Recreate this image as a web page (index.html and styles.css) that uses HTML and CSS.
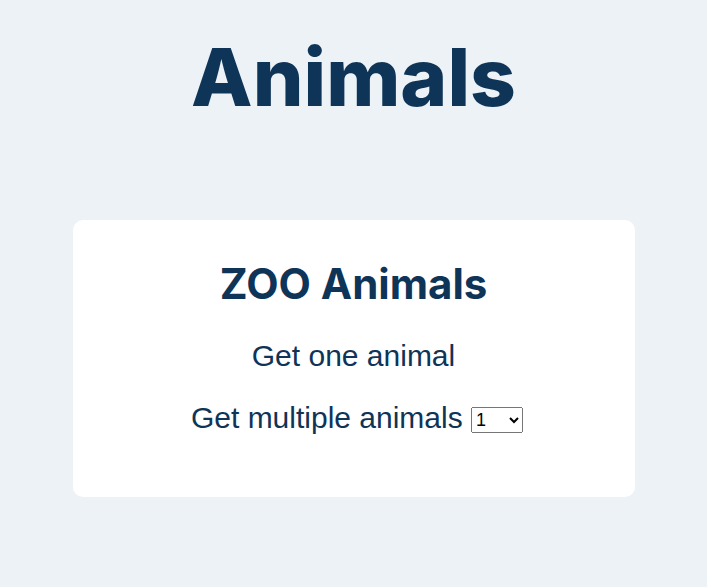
FILE: index.html
```html
<!DOCTYPE html>
<html>
<head>
<meta charset="utf-8">
<link rel="stylesheet" href="styles.css">
</head>
<body>
<h1 class="title">Animals</h1>
<main class="card">
  <h2 class="card-title">ZOO Animals</h2>
  <p class="line">Get one animal</p>
  <p class="line line-multi">Get multiple animals <select class="count"><option>1</option><option>2</option><option>3</option></select></p>
</main>
</body>
</html>
```
FILE: styles.css
```css
html, body {
  margin: 0;
  padding: 0;
  background: #edf2f7;
}
body {
  color: #0e3457;
  display: flex;
  flex-direction: column;
  align-items: center;
}
.title {
  font-family: Inter, "Liberation Sans", sans-serif;
  font-weight: 800;
  font-size: 80px;
  letter-spacing: 0;
  margin: 24px 0 0;
  line-height: 106px;
}
.card {
  margin-top: 90px;
  width: 562px;
  height: 277px;
  box-sizing: border-box;
  background: #fff;
  border-radius: 10px;
  display: flex;
  flex-direction: column;
  align-items: center;
  padding-top: 36px;
}
.card-title {
  font-family: Inter, "Liberation Sans", sans-serif;
  font-weight: 700;
  font-size: 42px;
  margin: 0 0 26px;
  line-height: 56px;
}
.line {
  font-family: "Liberation Sans", Arial, sans-serif;
  font-size: 30px;
  margin: 0 0 26px;
  line-height: 36px;
}
.line-multi {
  padding-left: 7px;
}
.count {
  font-family: "Liberation Sans", Arial, sans-serif;
  font-size: 18px;
  width: 52px;
  height: 26px;
  margin-left: 0;
  vertical-align: middle;
}
```
